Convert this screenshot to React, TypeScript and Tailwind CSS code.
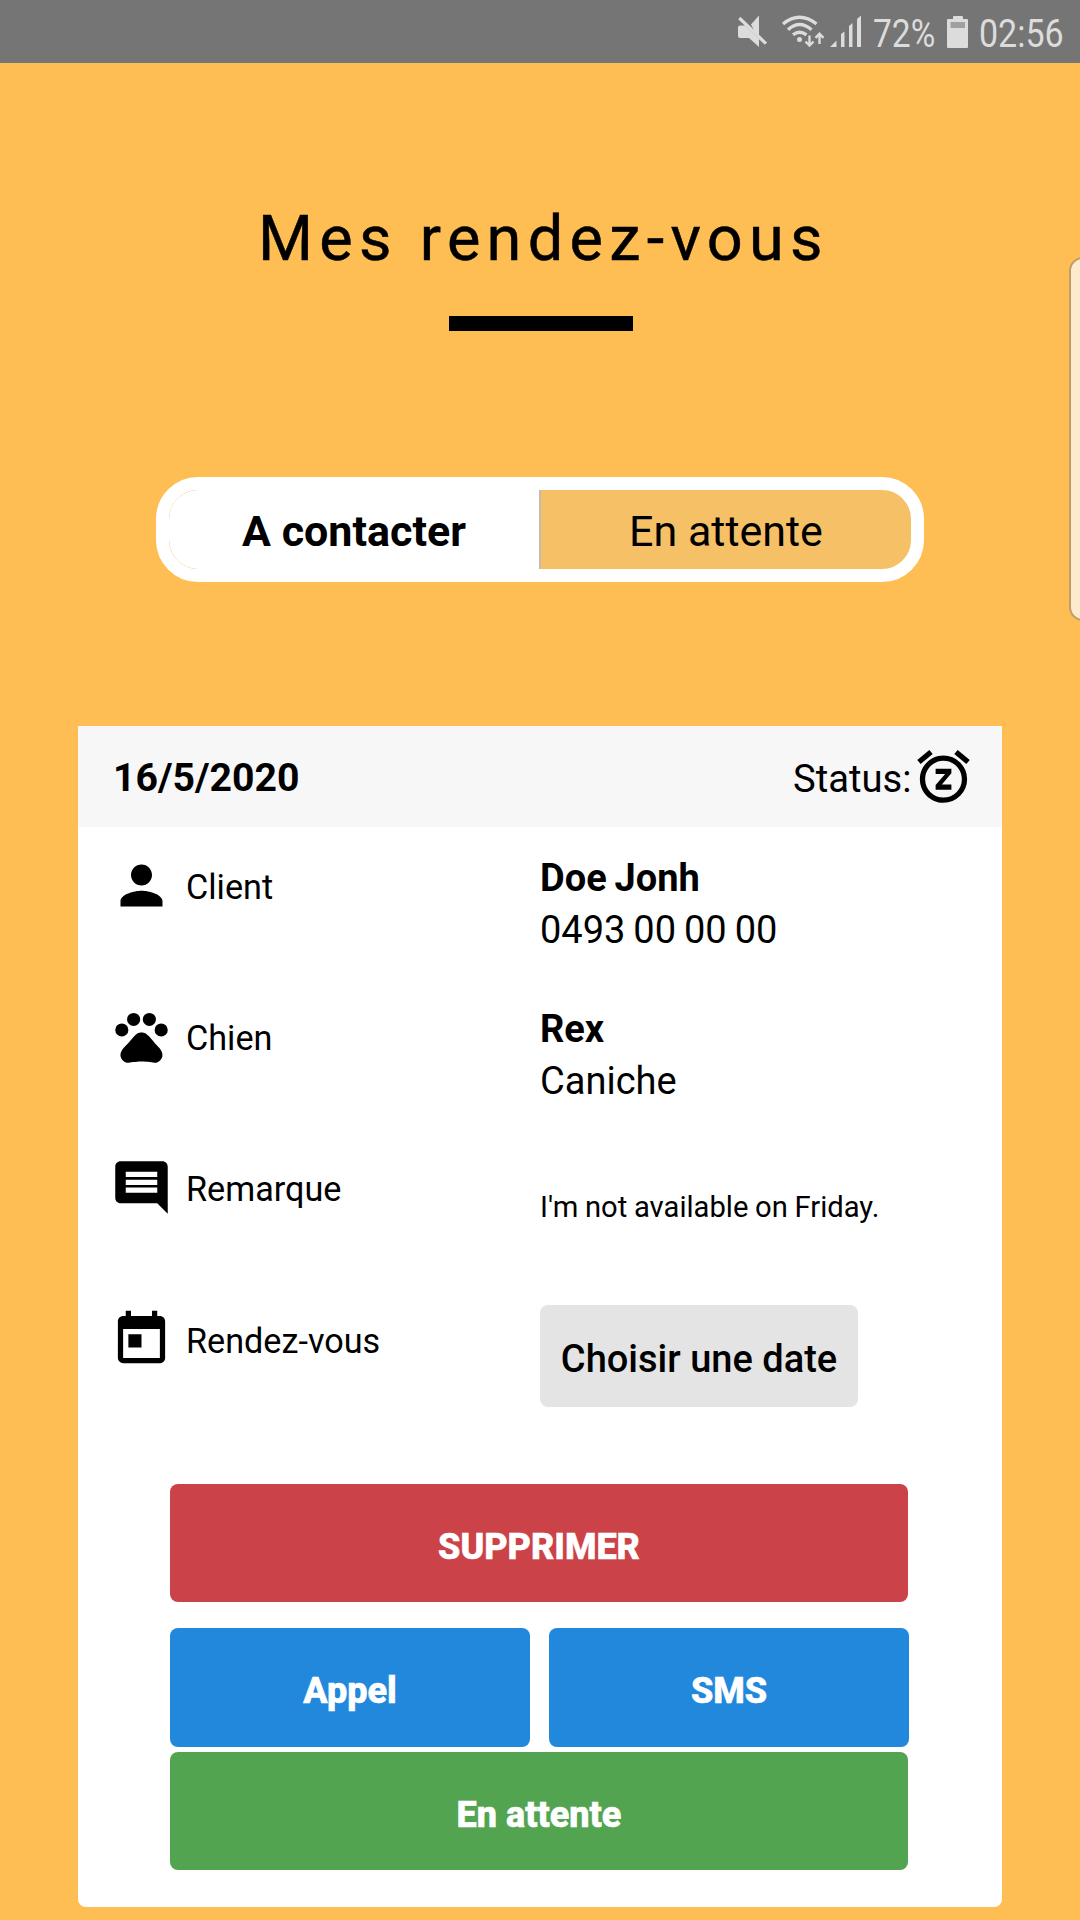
import type { ReactNode } from "react";
import { MdComment, MdPerson, MdPets, MdSnooze, MdToday } from "react-icons/md";

function StatusBar() {
  return (
    <div className="flex h-[63px] w-full bg-[#757575] text-[#dcdcdc]">
      <svg className="h-[63px] w-[148px] ml-[720px] shrink-0" viewBox="0 0 148 63" fill="currentColor">
        <path d="M39 15.500v24L31 24.500z" />
        <path d="M18 27.500q0-2 2-2h5l14 13.500V47l-10-9h-9q-2 0-2-2z" />
        <path d="M19.300 18L46 43.700" stroke="currentColor" strokeWidth="3.200" fill="none" />
        <g fill="none" stroke="currentColor" strokeWidth="3.400">
          <path d="M63 24Q79.500 10.500 96.500 24" />
          <path d="M68 29.700Q79.500 19.500 91.500 29.700" />
          <path d="M73 34.800Q79.500 29.500 86.500 34.800" />
        </g>
        <circle cx="79.500" cy="39.500" r="2.500" />
        <path d="M89.500 35.500v10M85.500 41.500l4 4 4-4M99.500 44V34M95.500 37.800l4-4 4 4" fill="none" stroke="currentColor" strokeWidth="2.400" />
        <path d="M110 47l6.500-6.500V47zM121 34l3.500-2.500V47H121zM129 26l3.500-3v24H129zM137 19l4-3.500V47h-4z" />
      </svg>
      <span className="w-[79px] text-[39.5px] leading-[68px] shrink-0 pl-[5px]">
        <span className="inline-block origin-left scale-x-[0.85]">72%</span>
      </span>
      <svg className="h-[63px] w-[22px] shrink-0" viewBox="0 0 22 63">
        <path d="M6 19v-2q0-1 1-1h8q1 0 1 1v2h4q1 0 1 1v27q0 1-1 1H1q-1 0-1-1V20q0-1 1-1z" fill="#dcdcdc" />
        <rect x="3.500" y="22" width="14.500" height="6" fill="#a0a0a0" />
      </svg>
      <span className="pl-[10px] text-[39.5px] leading-[68px]">
        <span className="inline-block origin-left scale-x-[0.86]">02:56</span>
      </span>
    </div>
  );
}

function Row({ icon, label, children }: { icon: ReactNode; label: string; children: ReactNode }) {
  return (
    <div className="flex h-[151.200px] text-[38px]">
      <div className="flex w-[462px] pl-[31.500px] pt-[27px]">
        <span className="text-[63px]">{icon}</span>
        <span className="ml-[13.500px] mt-[8px] text-[34.200px] leading-[50px]">{label}</span>
      </div>
      {children}
    </div>
  );
}

function Value({ title, detail }: { title: string; detail: string }) {
  return (
    <div className="pt-[25px] leading-[52px] [word-spacing:-1.5px]">
      <div className="font-bold">{title}</div>
      <div>{detail}</div>
    </div>
  );
}

export default function App() {
  return (
    <div className="relative flex h-[1920px] w-[1080px] flex-col items-center overflow-hidden bg-[#ffbe53] font-['Roboto',sans-serif] text-black">
      <StatusBar />
      <h1 className="mt-[136px] pl-[7px] text-[63px] leading-[80px] tracking-[0.1em] [-webkit-text-stroke:0.5px_black]">Mes rendez-vous</h1>
      <div className="ml-[2px] mt-[37px] h-[15px] w-[184px] bg-black" />

      <div className="mt-[146px] flex h-[105px] w-[768px] overflow-hidden rounded-[42px] border-[13px] border-white bg-[#f5c066] text-[43px] leading-[83px]">
        <button className="w-[370px] rounded-l-[29px] bg-white font-bold">A contacter</button>
        <button className="flex-1 border-l-2 border-[#c4bba9]">En attente</button>
      </div>

      <main className="mt-[144px] h-[1181px] w-[924px] overflow-hidden rounded-b-[8px] bg-white">
        <header className="flex h-[101px] items-center bg-[#f7f7f7] pl-[35px] pr-[27.500px] text-[38.200px]">
          <span className="pt-[3px] text-[39.200px] font-bold">16/5/2020</span>
          <span className="ml-auto pt-[6px]">Status:</span>
          <MdSnooze className="size-[63px]" />
        </header>

        <Row icon={<MdPerson />} label="Client">
          <Value title="Doe Jonh" detail="0493 00 00 00" />
        </Row>
        <Row icon={<MdPets />} label="Chien">
          <Value title="Rex" detail="Caniche" />
        </Row>
        <Row icon={<MdComment />} label="Remarque">
          <p className="pt-[58px] text-[29.200px] leading-[40px] [word-spacing:-0.600px]">I'm not available on Friday.</p>
        </Row>
        <Row icon={<MdToday />} label="Rendez-vous">
          <button className="mt-[24.400px] h-[102px] w-[318px] rounded-[8px] bg-[#e4e4e4] pt-[7px] font-medium">Choisir une date</button>
        </Row>

        <div className="ml-[92px] mt-[52px] flex w-[739px] flex-wrap justify-between text-[36px] font-extrabold text-white [-webkit-text-stroke:0.6px_white] [word-spacing:-1.5px]">
          <button className="h-[118px] w-[738px] rounded-[8px] bg-[#cb4349] pt-[8px]">SUPPRIMER</button>
          <button className="mt-[26px] h-[119px] w-[360px] rounded-[8px] bg-[#2288dc] pt-[7px]">Appel</button>
          <button className="mt-[26px] h-[119px] w-[360px] rounded-[8px] bg-[#2288dc] pt-[7px]">SMS</button>
          <button className="mt-[5px] h-[118px] w-[738px] rounded-[8px] bg-[#53a451] pt-[8px]">En attente</button>
        </div>
      </main>

      <div className="absolute left-[1069px] top-[257px] h-[364px] w-[30px] rounded-[14px] border-2 border-[#bf9f67] bg-[#feebcd]" />
    </div>
  );
}
